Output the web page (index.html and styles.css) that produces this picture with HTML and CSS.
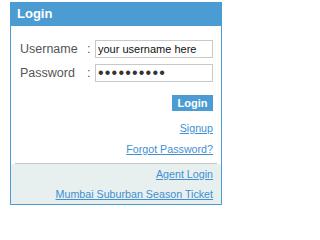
FILE: index.html
```html
<!DOCTYPE html>
<html>
<head>
<meta charset="utf-8">
<link rel="stylesheet" href="styles.css">
</head>
<body>
<div class="panel">
  <div class="header">Login</div>
  <div class="form">
    <div class="row">
      <span class="label">Username</span><span class="colon">:</span>
      <input class="field" type="text" value="your username here">
    </div>
    <div class="row">
      <span class="label">Password</span><span class="colon">:</span>
      <input class="field pass" type="password" value="abcdefghij">
    </div>
    <div class="actions"><button class="btn">Login</button></div>
    <div class="link-row first"><a href="#">Signup</a></div>
    <div class="link-row"><a href="#">Forgot Password?</a></div>
  </div>
  <div class="sep"></div>
  <div class="extra">
    <div class="link-row alt"><a href="#">Agent Login</a></div>
    <div class="link-row alt"><a href="#">Mumbai Suburban Season Ticket</a></div>
  </div>
</div>
</body>
</html>
```
FILE: styles.css
```css
body {
  margin: 0;
  font-family: "Liberation Sans", Arial, sans-serif;
  background: #fff;
}
.panel {
  margin: 2px 0 0 10px;
  width: 210px;
  border: 1px solid #4b9cd3;
  border-top: 0;
}
.header {
  height: 24px;
  line-height: 24px;
  background: #4b9cd3;
  color: #fff;
  font-weight: bold;
  font-size: 13px;
  padding-left: 6px;
}
.form {
  padding: 14px 8px 0 9px;
}
.row {
  display: flex;
  align-items: center;
  height: 18px;
  margin-bottom: 6px;
}
.label {
  width: 66px;
  font-size: 12.5px;
  color: #555;
}
.colon {
  width: 7px;
  padding-left: 1px;
  font-size: 12.5px;
  color: #555;
}
.field {
  box-sizing: border-box;
  width: 118px;
  height: 18px;
  margin: 0 0 0 1px;
  padding: 0 2px;
  border: 1px solid #c8c8c8;
  font-family: "Liberation Sans", Arial, sans-serif;
  font-size: 11px;
  color: #111;
  outline: none;
}
.pass {
  font-size: 16px;
  letter-spacing: 1.2px;
  color: #333;
}
.actions {
  display: flex;
  justify-content: flex-end;
  margin-top: 13px;
}
.btn {
  width: 41px;
  height: 16px;
  padding: 0;
  border: 0;
  background: #4b9cd3;
  color: #fff;
  font-family: "Liberation Sans", Arial, sans-serif;
  font-weight: bold;
  font-size: 11px;
}
.link-row {
  text-align: right;
  font-size: 10.7px;
  line-height: 21px;
}
.first {
  margin-top: 7px;
}
.link-row a {
  color: #3f8fd2;
}
.sep {
  height: 1px;
  background: #c6c6c6;
  margin: 3px 4px 0 4px;
}
.extra {
  background: #e8efef;
  padding: 0 8px 0 9px;
}
.alt {
  line-height: 20px;
}
```
